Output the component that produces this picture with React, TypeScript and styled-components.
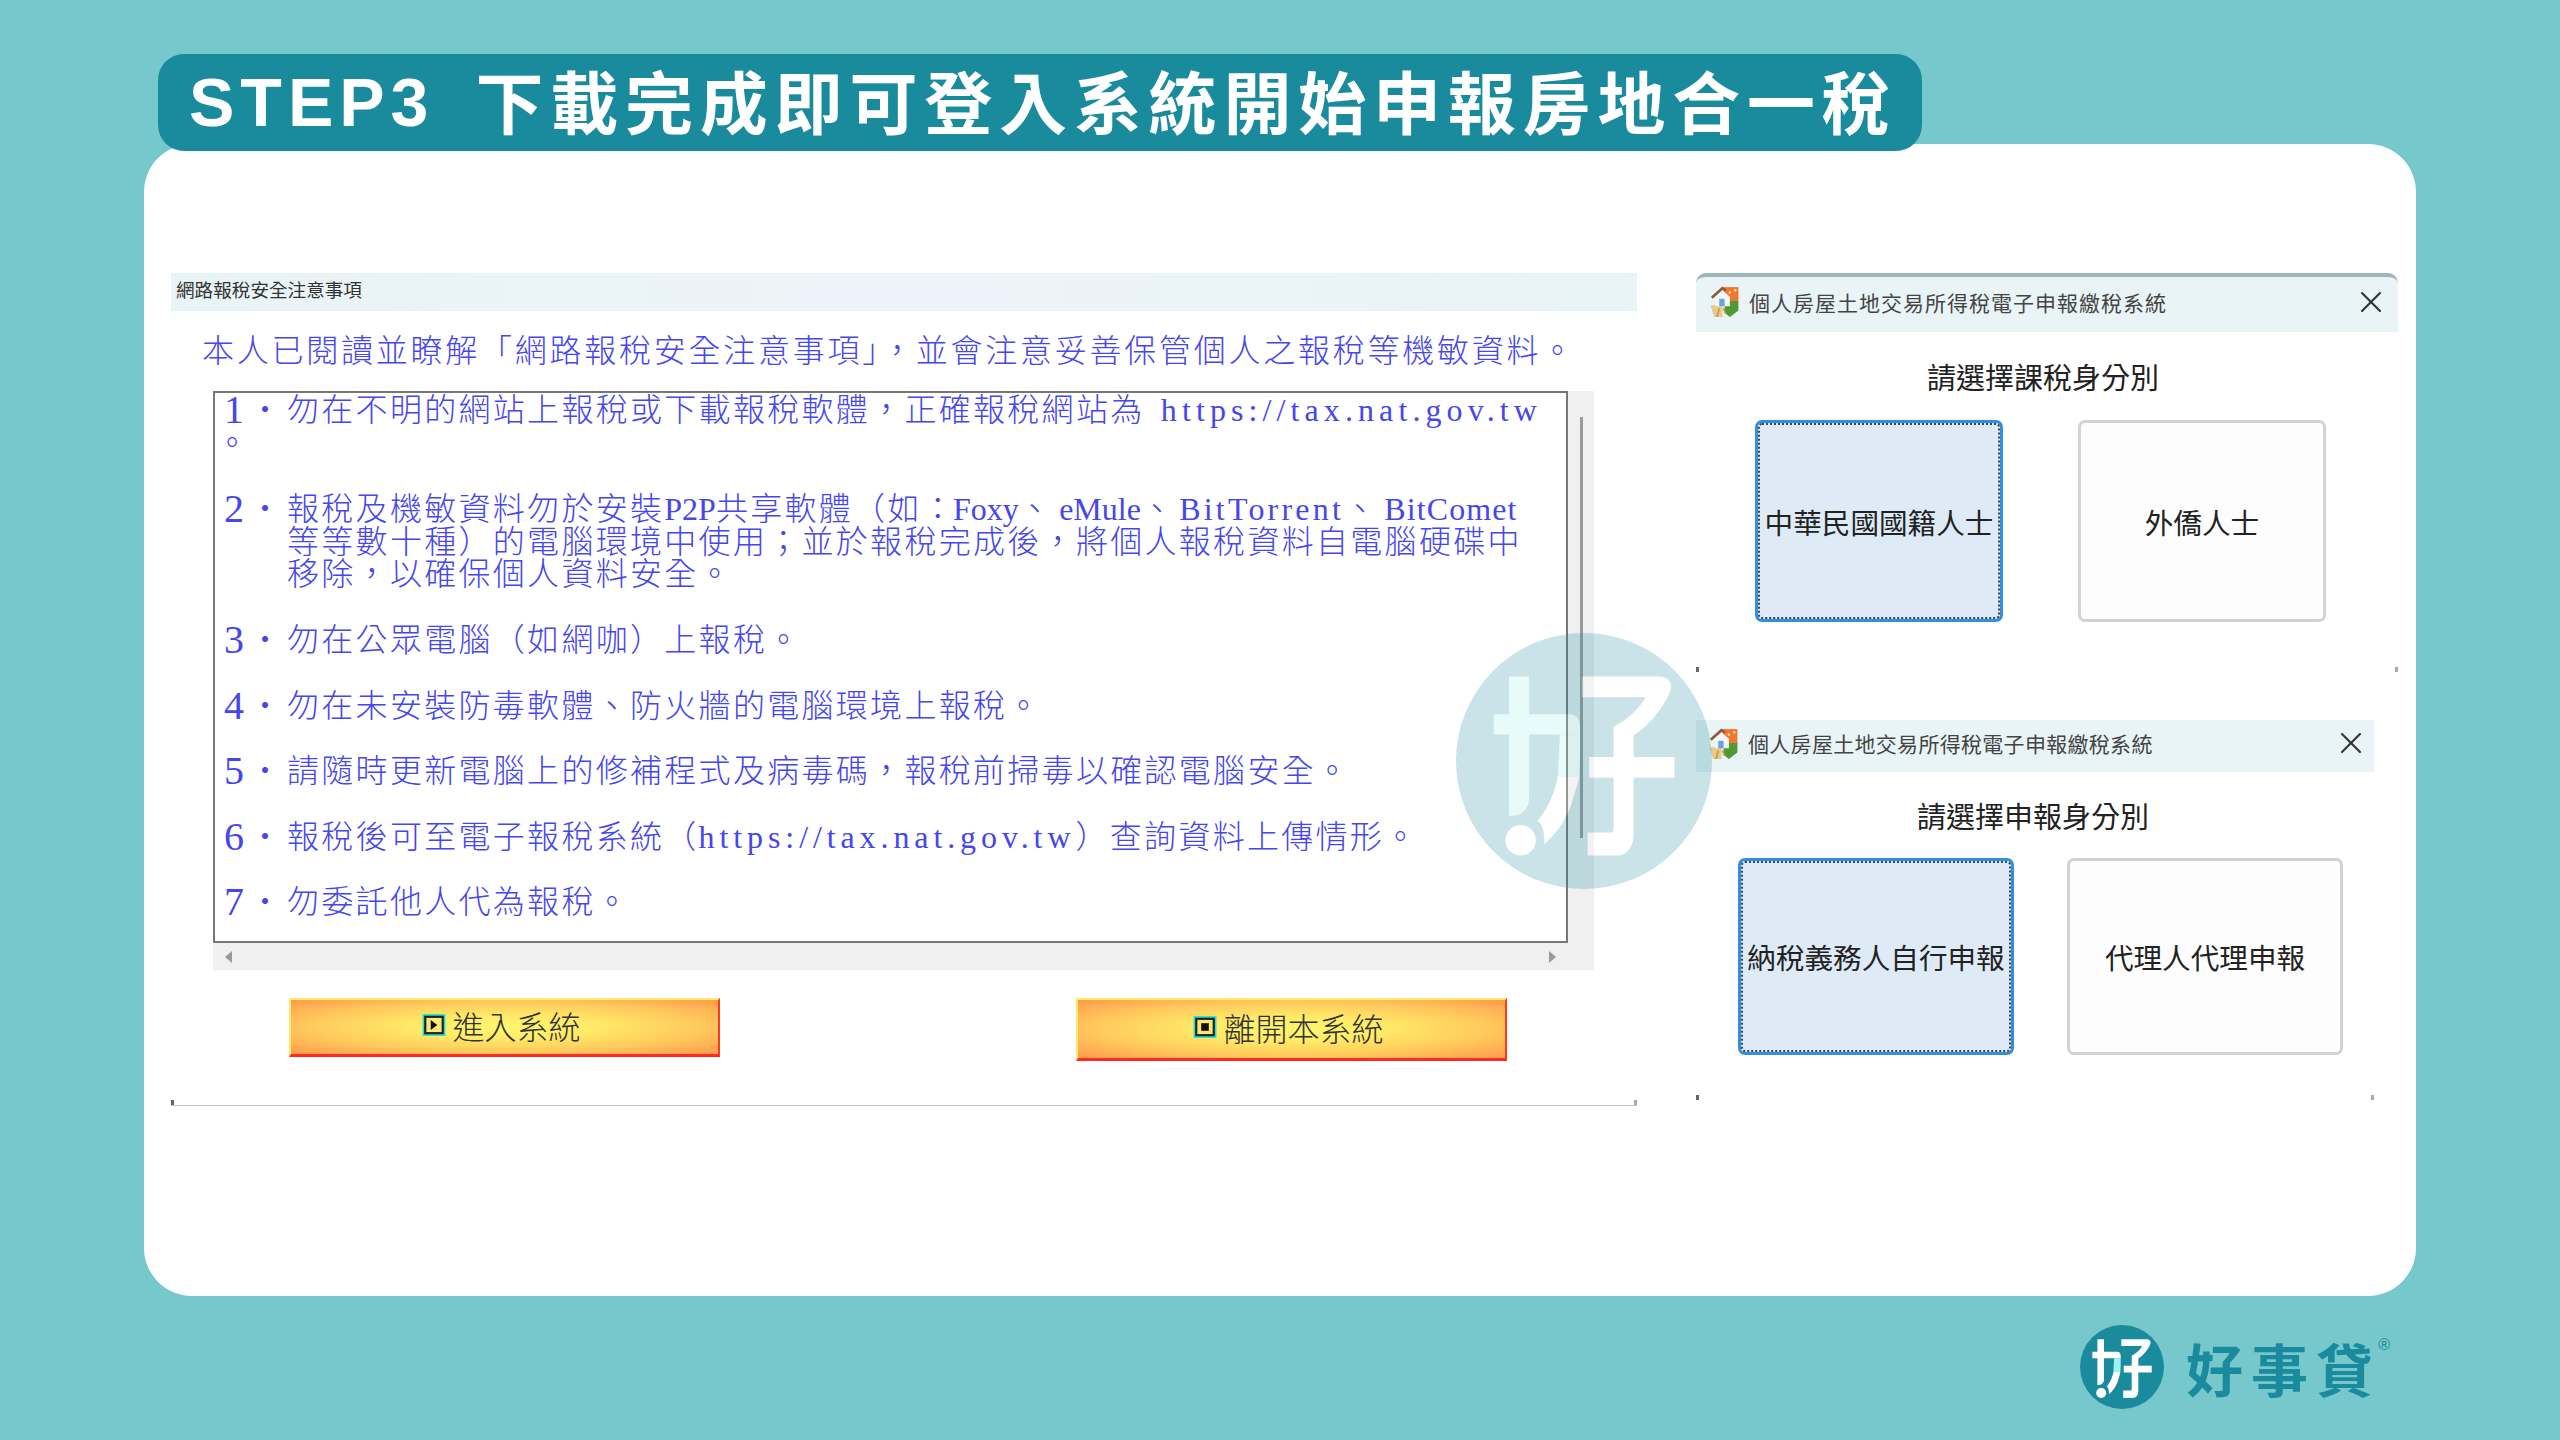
import styled, { createGlobalStyle } from "styled-components";
import { X } from "lucide-react";

const TEAL = "#1a8b9d";
const BLUE = "#4646ee";
const SANS = `"Noto Sans CJK TC", "Liberation Sans", sans-serif`;
const MING = `"Liberation Serif", "Noto Sans CJK TC", serif`;

const GlobalStyle = createGlobalStyle`
  html, body { margin: 0; padding: 0; background: #76c8cc; }
  * { box-sizing: border-box; }
`;

const Page = styled.div`
  width: 2560px;
  height: 1440px;
  display: flex;
  flex-direction: column;
  padding-top: 54px;
  overflow: hidden;
  background: #76c8cc;
  font-family: ${SANS};
`;
const TitleBar = styled.h1`
  position: relative;
  z-index: 2;
  width: 1764px;
  height: 97px;
  margin: 0 0 0 158px;
  padding: 0 0 6px 31px;
  display: flex;
  align-items: center;
  gap: 41px;
  border-radius: 26px;
  background: ${TEAL};
  color: #fff;
  font-size: 68px;
  font-weight: 700;
  letter-spacing: 6.8px;
  white-space: nowrap;
`;
const TitleLatin = styled.span`
  margin-top: 5px;
  font-family: "Liberation Sans", sans-serif;
  letter-spacing: 6px;
`;
const Card = styled.main`
  position: relative;
  width: 2272px;
  height: 1152px;
  margin: -7px 0 0 144px;
  padding: 129px 0 0 27px;
  display: flex;
  align-items: flex-start;
  gap: 59px;
  border-radius: 48px;
  background: #fff;
`;
const Corners = styled.section`
  position: relative;
  &::before,
  &::after {
    content: "";
    position: absolute;
    bottom: 0;
    width: 3px;
    height: 5px;
    background: #666;
  }
  &::before { left: 0; }
  &::after { right: 0; background: #aaa; }
`;
const LeftDialog = styled(Corners)`
  width: 1466px;
  height: 833px;
  border-bottom: 1px solid #c4c4c4;
`;
const LeftHeader = styled.header`
  height: 38px;
  padding: 0 0 7px 5px;
  display: flex;
  align-items: center;
  background: linear-gradient(90deg, #e9f4f6, #ecf3fa 50%, #e9f4f6);
  color: #333;
  font-size: 18.6px;
`;
const Intro = styled.p`
  height: 80px;
  margin: 0 0 0 31px;
  line-height: 80px;
  color: ${BLUE};
  font-family: ${MING};
  font-size: 32px;
  font-weight: 300;
  letter-spacing: 2.75px;
  white-space: nowrap;
`;
const ScrollArea = styled.div`
  width: 1381px;
  height: 579px;
  margin-left: 42px;
  display: grid;
  grid-template-columns: 1355px 26px;
  grid-template-rows: 552px 27px;
  background: #f0f0f0;
`;
const Terms = styled.ol`
  margin: 0;
  padding: 1px 0 0 9px;
  list-style: none;
  border: 2px solid #777;
  background: #fff;
  color: ${BLUE};
  font-family: ${MING};
  font-size: 32px;
  font-weight: 300;
  line-height: 32.6px;
  letter-spacing: 2.3px;
  white-space: nowrap;
`;
const Term = styled.li`
  display: grid;
  grid-template-columns: 25px 38px 1fr;
  margin-bottom: 33px;
`;
const FirstTerm = styled(Term)`
  margin-bottom: 34px;
`;
const TermNo = styled.span`
  font-size: 40px;
  font-weight: 400;
  letter-spacing: 0;
`;
const TermDot = styled.span`
  text-align: center;
  padding-right: 7px;
`;
const TermLines = styled.div`
  display: flex;
  flex-direction: column;
`;
const Stray = styled.span`
  grid-column: 1 / 3;
  margin-left: -8px;
`;
const Latin = styled.span<{ $ls: number; $left?: number }>`
  margin-left: ${(p) => p.$left ?? 0}px;
  letter-spacing: ${(p) => p.$ls}px;
`;
const VTrack = styled.div`
  grid-row: 1 / 3;
  grid-column: 2;
  padding: 26px 0 0 12px;
`;
const VThumb = styled.div`
  width: 3px;
  height: 421px;
  background: #9a9a9a;
`;
const HTrack = styled.div`
  padding: 0 12px;
  display: flex;
  align-items: center;
  justify-content: space-between;
`;
const Arrow = styled.i<{ $dir: "left" | "right" }>`
  border-style: solid;
  border-color: transparent;
  border-width: 6px 0 6px 0;
  ${(p) => (p.$dir === "left" ? "border-right: 7px solid #999;" : "border-left: 7px solid #999;")}
`;
const ActionRow = styled.div`
  margin-top: 28px;
  padding-left: 118px;
  display: flex;
  align-items: flex-start;
  gap: 356px;
`;
const ActionButton = styled.button<{ $tall?: boolean }>`
  width: 431px;
  height: ${(p) => (p.$tall ? "63px" : "59px")};
  display: flex;
  align-items: center;
  justify-content: center;
  gap: 6px;
  padding: 0 6px 4px 0;
  border-style: solid;
  border-width: 2px 2px 3px 2px;
  border-color: #ffea6e #ff3a20 #ff2a20 #ffea6e;
  background: radial-gradient(ellipse farthest-corner at 50% 50%, #fff770 0%, #ffea68 30%, #ffc95c 65%, #ff9a4a 100%);
  color: #333;
  font-family: ${SANS};
  font-size: 32px;
  font-weight: 300;
`;
const ActionIcon = styled.svg`
  width: 24px;
  height: 24px;
  flex: none;
`;
const RightColumn = styled.div`
  display: flex;
  flex-direction: column;
  gap: 48px;
`;
const ChoiceDialog = styled(Corners)<{ $w: number; $h: number }>`
  width: ${(p) => p.$w}px;
  height: ${(p) => p.$h}px;
`;
const DialogBar = styled.header<{ $strip?: boolean; $h: number }>`
  height: ${(p) => p.$h}px;
  padding: 0 ${(p) => (p.$strip ? 9 : 5)}px 6px ${(p) => (p.$strip ? 11 : 10)}px;
  display: flex;
  align-items: center;
  background: #e9f4f6;
  color: #444;
  font-size: 21px;
  ${(p) => p.$strip && "border-top: 4px solid #9fb5b9; border-radius: 10px 10px 0 0;"}
`;
const DialogTitle = styled.span<{ $spacing: number }>`
  flex: 1;
  margin-left: 9px;
  letter-spacing: ${(p) => p.$spacing}px;
  white-space: nowrap;
`;
const Question = styled.h2<{ $h: number; $shift: number }>`
  height: ${(p) => p.$h}px;
  margin: 0;
  padding-right: ${(p) => p.$shift}px;
  display: flex;
  align-items: center;
  justify-content: center;
  color: #222;
  font-size: 29px;
  font-weight: 400;
`;
const Choices = styled.div<{ $left: number; $gap: number }>`
  padding-left: ${(p) => p.$left}px;
  display: flex;
  gap: ${(p) => p.$gap}px;
`;
const Choice = styled.button<{ $active?: boolean; $w: number; $h: number }>`
  width: ${(p) => p.$w}px;
  height: ${(p) => p.$h}px;
  padding: 0;
  border: 3px solid ${(p) => (p.$active ? "#2f8fe0" : "#d2d2d2")};
  border-radius: 7px;
  background: ${(p) => (p.$active ? "#deebf7" : "#fdfdfd")};
  outline: ${(p) => (p.$active ? "2px dotted #444" : "none")};
  outline-offset: -5px;
  color: #222;
  font-family: ${SANS};
  font-size: 28.6px;
  white-space: nowrap;
`;
const Mark = styled.svg<{ $size: number }>`
  display: block;
  width: ${(p) => p.$size}px;
  height: ${(p) => p.$size}px;
  flex: none;
`;
const Watermark = styled.div`
  position: absolute;
  left: 1312px;
  top: 489px;
  opacity: 0.23;
  pointer-events: none;
`;
const Footer = styled.footer`
  padding: 29px 179px 0 0;
  display: flex;
  justify-content: flex-end;
  gap: 22px;
`;
const Wordmark = styled.div`
  position: relative;
  height: 84px;
  display: flex;
  align-items: center;
  color: ${TEAL};
  font-size: 57px;
  font-weight: 700;
  letter-spacing: 8px;
  line-height: 1;
`;
const Registered = styled.span`
  position: absolute;
  right: -9px;
  top: 12px;
  font-family: "Liberation Sans", sans-serif;
  font-size: 16px;
  font-weight: 400;
  letter-spacing: 0;
`;

type LogoProps = { size: number; bar: string; arch: string };

function LogoMark({ size, bar, arch }: LogoProps) {
  return (
    <Mark $size={size} viewBox="0 0 84 84" aria-hidden="true">
      <circle cx="42" cy="42" r="42" fill={TEAL} />
      {/* left half of the mark: arch, bar and the exclamation dot */}
      <path d="M24 33.3h10.1L33.4 47h7l.3-7V33.3H24z" fill={arch} />
      <path d="M33.4 47c-.2 1.4-.5 2.5-.9 3.6-1.2 4.4-3.2 8-5.8 11 1.6 1.2 2.4 3.4 2.3 7.7 4.8-4.2 8-9.3 9.5-15.3.8-2.3 1.5-4.6 1.9-7z" fill="#fff" />
      <path d="M12.4 26.7H38c1.8.2 2.7 2.2 2.7 4.3v2.3H12.4z" fill={bar} />
      <path d="M17.4 14.3H24V54c0 4-2.4 6-6.6 6z" fill={bar} />
      <circle cx="21.2" cy="68" r="5" fill="#fff" />
      {/* right half of the mark */}
      <path
        d="M41.3 14.3H66.6c3 0 4.6 2 3.8 4.4-1.4 4.2-6 11-12.1 14.9V66c0 4-2.2 7-5.3 7H43.2v-7.5h7.4c.7 0 1.1-.4 1.1-1.1V30.8c4.4-2.3 8.3-5.7 10.5-9.7H41.3z"
        fill="#fff"
      />
      <path d="M43.7 40.7h28v6.8h-28z" fill="#fff" />
    </Mark>
  );
}

function HouseIcon() {
  return (
    <Mark $size={33} viewBox="0 0 30 31" aria-hidden="true">
      <path d="M15 2h14v13H15z" fill="#f0762e" />
      <circle cx="21" cy="7" r="1.2" fill="#ffe0b0" />
      <circle cx="26" cy="5" r="1.2" fill="#ffe0b0" />
      <path d="M16 15h13v9l-8 6-5-4z" fill="#4f9a35" />
      <path d="M3 19h11v11H6z" fill="#e8c98a" />
      <path d="M8 10l6-5 7 6v9H8z" fill="#f4f7fa" />
      <path d="M4 12L14 3l3 2" stroke="#8a5a3c" strokeWidth="2.4" fill="none" />
      <path d="M11 13h5v7h-5z" fill="#6aa3d8" />
      <path d="M11 22l-2 8M15 22l2 5" stroke="#c49a55" strokeWidth="1.6" fill="none" />
    </Mark>
  );
}

function ActionGlyph({ kind }: { kind: "play" | "stop" }) {
  return (
    <ActionIcon viewBox="0 0 22 22" aria-hidden="true">
      <rect x="0.5" y="1" width="21" height="20" fill="#22e0d8" />
      <rect x="2" y="2.5" width="18" height="17" fill="#222" />
      <rect x="4" y="4.5" width="14" height="13" fill="#ffe873" />
      {kind === "play" ? <path d="M8 6.5l6 4.5-6 4.5z" fill="#111" /> : <rect x="7.5" y="7.5" width="7" height="7" fill="#111" />}
    </ActionIcon>
  );
}

type ChoiceDialogConfig = {
  w: number;
  h: number;
  barH: number;
  strip?: boolean;
  spacing: number;
  question: string;
  questionH: number;
  shift: number;
  left: number;
  gap: number;
  btnW: number;
  btnH: number;
  options: [string, string];
};

const dialogs: ChoiceDialogConfig[] = [
  {
    w: 702,
    h: 399,
    barH: 59,
    strip: true,
    spacing: 1,
    question: "請選擇課稅身分別",
    questionH: 88,
    shift: 8,
    left: 59,
    gap: 75,
    btnW: 248,
    btnH: 202,
    options: ["中華民國國籍人士", "外僑人士"],
  },
  {
    w: 678,
    h: 380,
    barH: 52,
    spacing: 0.3,
    question: "請選擇申報身分別",
    questionH: 86,
    shift: 4,
    left: 42,
    gap: 53,
    btnW: 276,
    btnH: 197,
    options: ["納稅義務人自行申報", "代理人代理申報"],
  },
];

export default function App() {
  return (
    <Page>
      <GlobalStyle />
      <TitleBar>
        <TitleLatin>STEP3</TitleLatin>
        <span>下載完成即可登入系統開始申報房地合一稅</span>
      </TitleBar>
      <Card>
        <LeftDialog>
          <LeftHeader>網路報稅安全注意事項</LeftHeader>
          <Intro>本人已閱讀並瞭解「網路報稅安全注意事項」，並會注意妥善保管個人之報稅等機敏資料。</Intro>
          <ScrollArea>
            <Terms>
              <FirstTerm>
                <TermNo>1</TermNo>
                <TermDot>・</TermDot>
                <TermLines>
                  <span>
                    勿在不明的網站上報稅或下載報稅軟體，正確報稅網站為 <Latin $ls={5.1} $left={6}>https://tax.nat.gov.tw</Latin>
                  </span>
                </TermLines>
                <Stray>。</Stray>
              </FirstTerm>
              <Term>
                <TermNo>2</TermNo>
                <TermDot>・</TermDot>
                <TermLines>
                  <span>
                    報稅及機敏資料勿於安裝<Latin $ls={0}>P2P</Latin>共享軟體（如：<Latin $ls={0} $left={-3}>Foxy</Latin>、<Latin $ls={0} $left={6}>eMule</Latin>、<Latin $ls={3.2} $left={4}>BitTorrent</Latin>、<Latin $ls={1.1} $left={6}>BitComet</Latin>
                  </span>
                  <span>等等數十種）的電腦環境中使用；並於報稅完成後，將個人報稅資料自電腦硬碟中</span>
                  <span>移除，以確保個人資料安全。</span>
                </TermLines>
              </Term>
              <Term>
                <TermNo>3</TermNo>
                <TermDot>・</TermDot>
                <span>勿在公眾電腦（如網咖）上報稅。</span>
              </Term>
              <Term>
                <TermNo>4</TermNo>
                <TermDot>・</TermDot>
                <span>勿在未安裝防毒軟體、防火牆的電腦環境上報稅。</span>
              </Term>
              <Term>
                <TermNo>5</TermNo>
                <TermDot>・</TermDot>
                <span>請隨時更新電腦上的修補程式及病毒碼，報稅前掃毒以確認電腦安全。</span>
              </Term>
              <Term>
                <TermNo>6</TermNo>
                <TermDot>・</TermDot>
                <span>
                  報稅後可至電子報稅系統（<Latin $ls={4.9}>https://tax.nat.gov.tw</Latin>）查詢資料上傳情形。
                </span>
              </Term>
              <Term>
                <TermNo>7</TermNo>
                <TermDot>・</TermDot>
                <span>勿委託他人代為報稅。</span>
              </Term>
            </Terms>
            <VTrack>
              <VThumb />
            </VTrack>
            <HTrack>
              <Arrow $dir="left" />
              <Arrow $dir="right" />
            </HTrack>
          </ScrollArea>
          <ActionRow>
            <ActionButton>
              <ActionGlyph kind="play" />
              進入系統
            </ActionButton>
            <ActionButton $tall>
              <ActionGlyph kind="stop" />
              離開本系統
            </ActionButton>
          </ActionRow>
        </LeftDialog>
        <RightColumn>
          {dialogs.map((d) => (
            <ChoiceDialog key={d.question} $w={d.w} $h={d.h}>
              <DialogBar $strip={d.strip} $h={d.barH}>
                <HouseIcon />
                <DialogTitle $spacing={d.spacing}>個人房屋土地交易所得稅電子申報繳稅系統</DialogTitle>
                <X size={36} strokeWidth={1.4} color="#333" />
              </DialogBar>
              <Question $h={d.questionH} $shift={d.shift}>
                {d.question}
              </Question>
              <Choices $left={d.left} $gap={d.gap}>
                <Choice $active $w={d.btnW} $h={d.btnH}>
                  {d.options[0]}
                </Choice>
                <Choice $w={d.btnW} $h={d.btnH}>
                  {d.options[1]}
                </Choice>
              </Choices>
            </ChoiceDialog>
          ))}
        </RightColumn>
        <Watermark>
          <LogoMark size={256} bar="#9bf2f2" arch="#9bf2f2" />
        </Watermark>
      </Card>
      <Footer>
        <LogoMark size={84} bar="#ffffff" arch="#9ef2f2" />
        <Wordmark>
          好事貸
          <Registered>®</Registered>
        </Wordmark>
      </Footer>
    </Page>
  );
}
